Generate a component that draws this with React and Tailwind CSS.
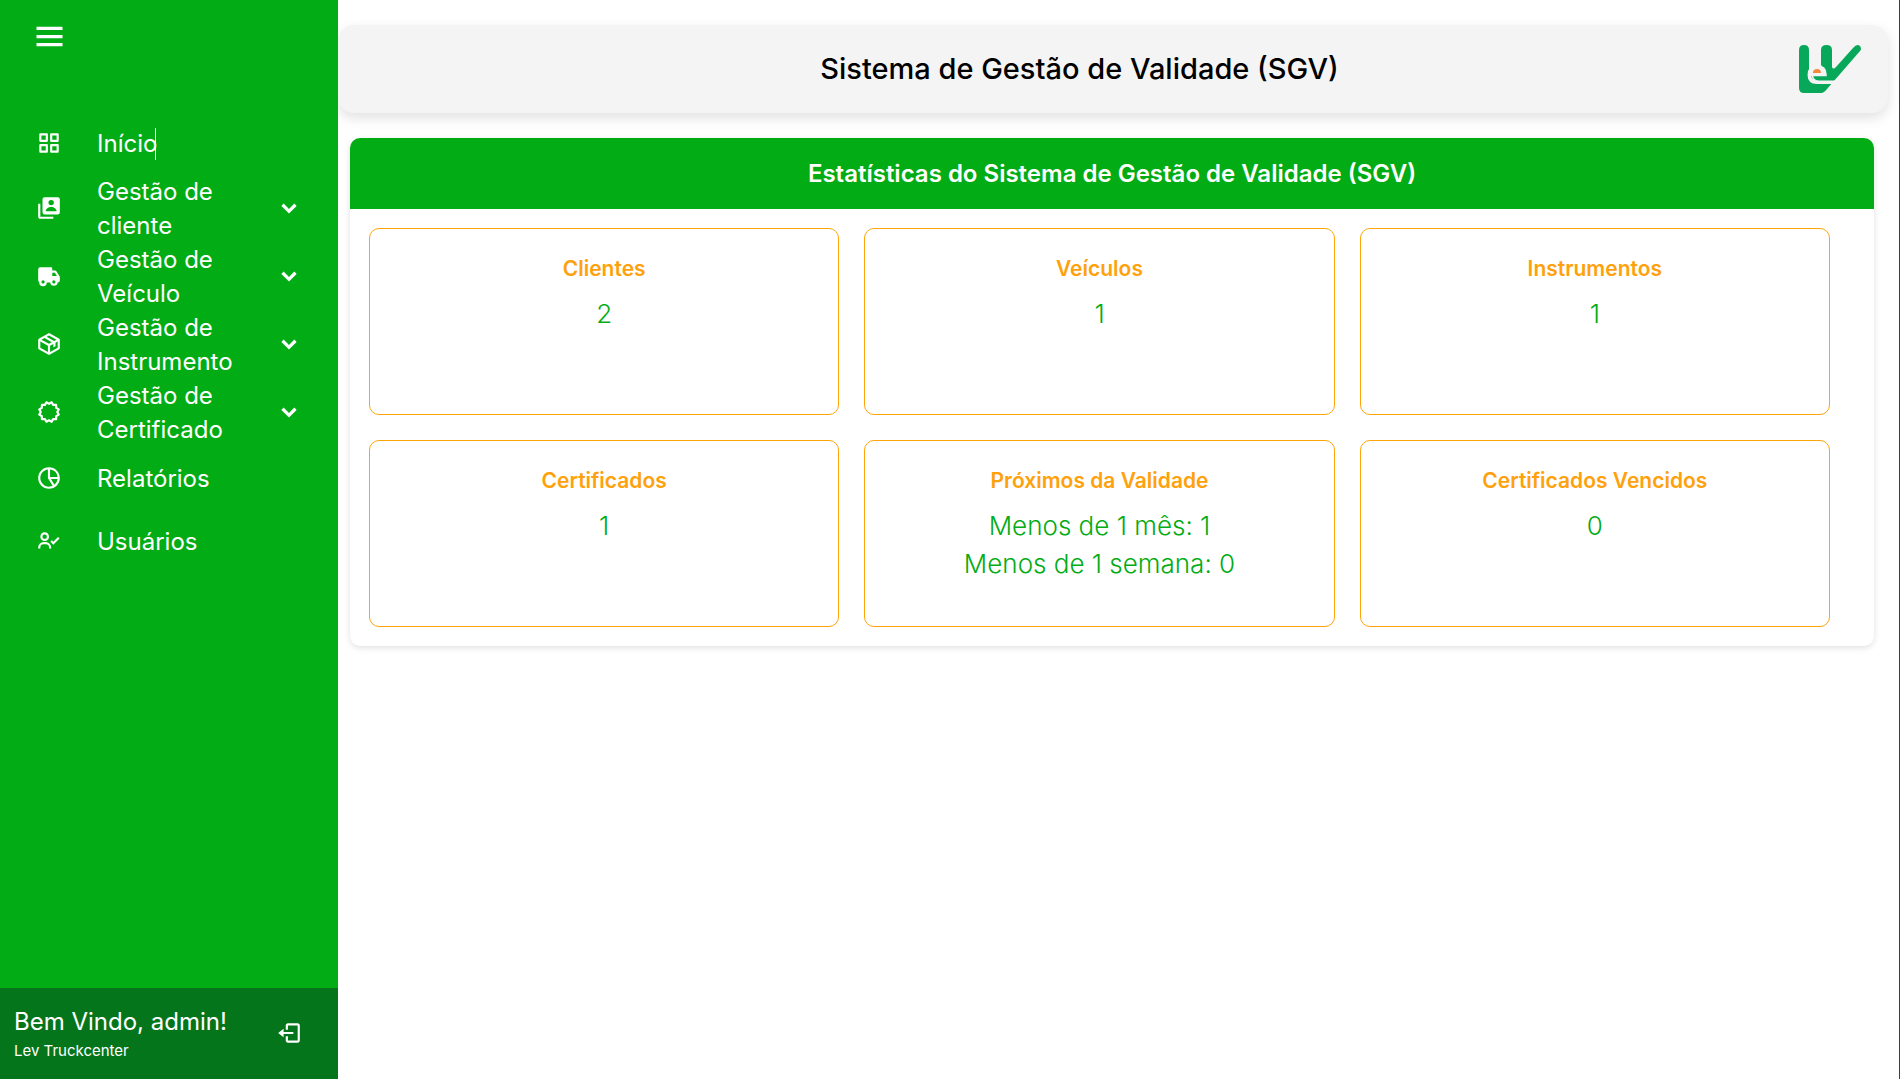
import {
  BiMenu, BiGridAlt, BiSolidUserAccount, BiSolidTruck, BiPackage, BiCertification,
  BiPieChartAlt2, BiUserCheck, BiSolidChevronDown, BiLogOut,
} from "react-icons/bi";

const navItems = [
  { label: "Início", Icon: BiGridAlt, caret: true },
  { label: "Gestão de cliente", Icon: BiSolidUserAccount, submenu: true },
  { label: "Gestão de Veículo", Icon: BiSolidTruck, submenu: true },
  { label: "Gestão de Instrumento", Icon: BiPackage, submenu: true },
  { label: "Gestão de Certificado", Icon: BiCertification, submenu: true },
  { label: "Relatórios", Icon: BiPieChartAlt2 },
  { label: "Usuários", Icon: BiUserCheck },
];

const stats = [
  { title: "Clientes", lines: ["2"] },
  { title: "Veículos", lines: ["1"] },
  { title: "Instrumentos", lines: ["1"] },
  { title: "Certificados", lines: ["1"] },
  { title: "Próximos da Validade", lines: ["Menos de 1 mês: 1", "Menos de 1 semana: 0"] },
  { title: "Certificados Vencidos", lines: ["0"] },
];

function NavItem({ label, Icon, submenu, caret }) {
  if (submenu) {
    return (
      <li>
        <button type="button" className="flex w-full items-center text-left">
          <span className="flex w-[97px] shrink-0 justify-center pb-0.5"><Icon className="size-[26px]" /></span>
          <span className="w-[143px] shrink-0">{label}</span>
          <span className="flex flex-1 justify-center pb-0.5"><BiSolidChevronDown className="size-[26px]" /></span>
        </button>
      </li>
    );
  }
  return (
    <li>
      <a href="#" className="flex h-[63px] items-center">
        <span className="flex w-[97px] shrink-0 justify-center pb-0.5"><Icon className="size-[26px]" /></span>
        <span>{label}</span>
        {caret && <span className="-ml-0.5 h-8 w-px bg-white" />}
      </a>
    </li>
  );
}

function Logo() {
  return (
    <svg viewBox="0 0 62 48" className="h-12 w-[62px]" role="img" aria-label="LEV">
      <path
        fill="#08a85a"
        d="M0 5Q0 0 5 0Q10 0 10 5V24H22V5Q22 0 27.500 0Q33 0 33 5V22Q34 25 37 22L54 3Q58-1.500 61 1Q63 4 61 6L28 44Q25 48 22 48H5Q0 48 0 43Z"
      />
      <path fill="#f4f4f4" d="M10 30V20H22L27 28Z" />
      <path
        fill="none"
        stroke="#f4f4f4"
        strokeWidth="3.500"
        d="M12 29.500H26Q26 22 18 22Q10.300 22 10.300 30Q10.300 37.200 18 37.200H38"
      />
      <path fill="#f4f4f4" d="M12.500 30.500Q13 36 18 36H20Q15 35 14 30.500Z" />
      <path fill="#f58a3c" d="M14 28Q14 24 18 24Q22 24 22 28Z" />
    </svg>
  );
}

export default function App() {
  return (
    <div className="flex min-h-screen border-r border-[#3c3c3c] bg-white font-['Inter','Open_Sans',sans-serif]">
      <aside className="relative z-10 flex w-[338px] shrink-0 flex-col bg-[#02ac14] text-white">
        <button type="button" aria-label="Menu" className="flex h-[72px] w-[98px] items-center justify-center">
          <BiMenu className="size-[39px]" />
        </button>
        <nav className="mt-10 flex-1">
          <ul className="text-[24px] leading-[34px]">
            {navItems.map((item) => <NavItem key={item.label} {...item} />)}
          </ul>
        </nav>
        <div className="flex h-[91px] items-center bg-[#05751c] pl-[14px]">
          <div className="w-[226px]">
            <p className="text-[24px] leading-[34px]">Bem Vindo, admin!</p>
            <p className="text-[15px] leading-6">Lev Truckcenter</p>
          </div>
          <button type="button" aria-label="Sair" className="flex flex-1 justify-center pb-0.5">
            <BiLogOut className="size-[26px]" />
          </button>
        </div>
      </aside>
      <main className="min-w-0 flex-1 pt-[25px]">
        <header className="mr-[11px] flex h-[88px] items-center rounded-2xl bg-[#f4f4f4] pr-[27px] shadow-[0_5px_13px_rgba(0,0,0,0.12)]">
          <h1 className="flex-1 pl-[22px] text-center text-[29px] font-medium leading-10 text-black">
            Sistema de Gestão de Validade (SGV)
          </h1>
          <Logo />
        </header>
        <section className="mt-[25px] ml-3 mr-[25px] overflow-hidden rounded-[10px] shadow-[0_2px_6px_rgba(0,0,0,0.12)]">
          <h2 className="flex h-[71px] items-center justify-center bg-[#02ac14] text-[24px] font-semibold text-white">
            Estatísticas do Sistema de Gestão de Validade (SGV)
          </h2>
          <div className="grid grid-cols-3 gap-[25px] py-[19px] pr-11 pl-[19px]">
            {stats.map(({ title, lines }) => (
              <article key={title} className="h-[187px] rounded-[10px] border border-[#ffa50a] pt-6 text-center">
                <h3 className="text-[21px] font-semibold leading-8 text-[#ffa10c]">{title}</h3>
                <div className="mt-2.5 text-[26px] font-light leading-[38px] text-[#02ac14]">
                  {lines.map((line) => <p key={line}>{line}</p>)}
                </div>
              </article>
            ))}
          </div>
        </section>
      </main>
    </div>
  );
}
